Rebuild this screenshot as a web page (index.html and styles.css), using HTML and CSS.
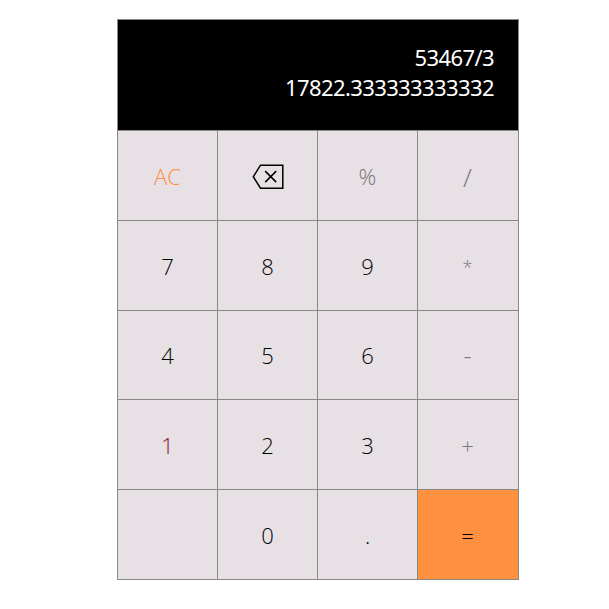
FILE: index.html
```html
<!DOCTYPE html>
<html lang="en">
<head>
<meta charset="utf-8">
<title>Calculator</title>
<link rel="stylesheet" href="styles.css">
</head>
<body>
<main class="calculator">
  <div class="display">
    <div class="expression">53467/3</div>
    <div class="result">17822.333333333332</div>
  </div>
  <div class="keys">
    <button class="key clear">AC</button>
    <button class="key delete" aria-label="Delete"><svg class="backspace" viewBox="0 0 32 26"><path d="M8.5 1.2H30.8V24.2H8.5L1.3 12.7Z"/><path d="M13.2 7.1L24.2 18.1M24.2 7.1L13.2 18.1"/></svg></button>
    <button class="key operator percent">%</button>
    <button class="key operator slash">/</button>
    <button class="key">7</button>
    <button class="key">8</button>
    <button class="key">9</button>
    <button class="key operator times">*</button>
    <button class="key">4</button>
    <button class="key">5</button>
    <button class="key">6</button>
    <button class="key operator minus">-</button>
    <button class="key one">1</button>
    <button class="key">2</button>
    <button class="key">3</button>
    <button class="key operator">+</button>
    <button class="key"></button>
    <button class="key">0</button>
    <button class="key">.</button>
    <button class="key equals">=</button>
  </div>
</main>
</body>
</html>
```

FILE: styles.css
```css
* { box-sizing: border-box; }
body { margin: 0; background: #fff; font-family: "Open Sans", "Noto Sans", sans-serif; }
.calculator { width: 402px; height: 561px; margin: 19px 0 0 117px; border: 1px solid #888; background: #888; }
.display { height: 110px; padding: 22px 24px 0 0; background: #000; color: #fff; font: 22px/30px "Noto Sans", sans-serif; letter-spacing: -0.6px; text-align: right; }
.keys { display: grid; grid-template-columns: 99px 99px 99px 100px; grid-template-rows: 89px 89px 88px 89px 89px; gap: 1px; padding-top: 1px; }
.key { display: flex; align-items: center; justify-content: center; margin: 0; padding: 0; border: 0; background: #e7e0e5; color: #000; font: 300 22px/30px "Open Sans", "Noto Sans", sans-serif; }
.clear { color: #ff8c3b; }
.delete { padding-top: 2px; }
.operator { padding-right: 1px; color: #777; }
.percent { padding-right: 0; }
.slash { padding-top: 2px; font-size: 26px; }
.times { padding-top: 3px; font-size: 18px; }
.minus { font-size: 25px; }
.one { color: #8b2020; }
.equals { padding-right: 1px; background: #ff9140; }
.backspace { width: 32px; height: 26px; fill: none; stroke: #000; stroke-width: 1.5; }
```
